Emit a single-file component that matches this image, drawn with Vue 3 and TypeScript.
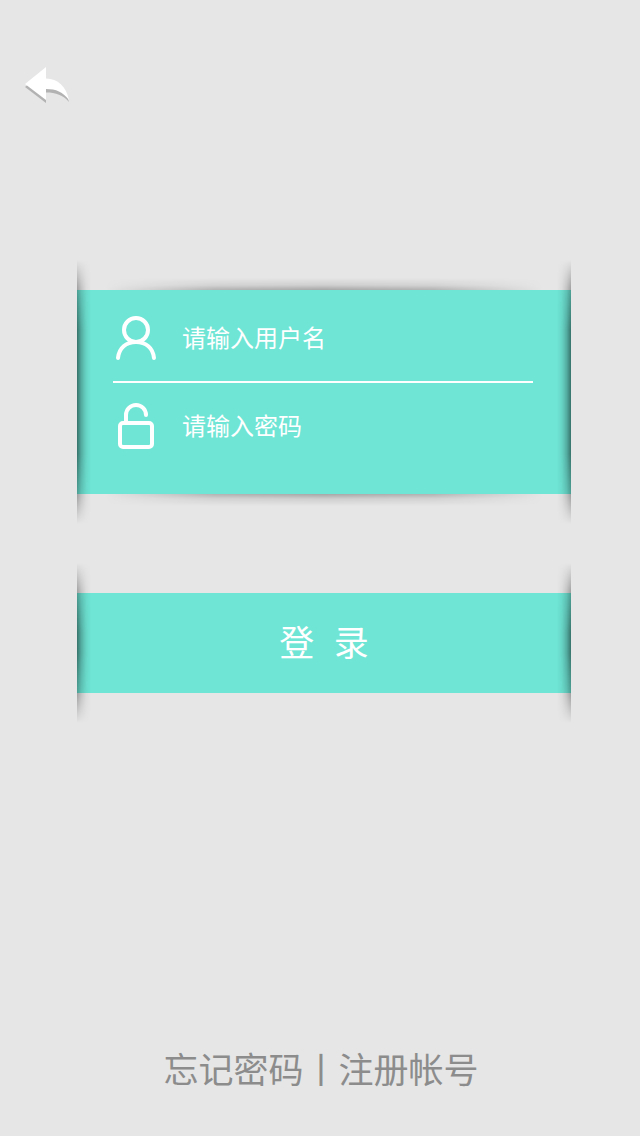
<script setup lang="ts">
import { ref } from 'vue'

const username = ref<string>('')
const password = ref<string>('')
</script>

<template>
  <div class="page">
    <header class="top">
      <button class="back" type="button" aria-label="返回">
        <svg width="46" height="38" viewBox="0 0 46 38" aria-hidden="true">
          <g transform="translate(0 3)" fill="#b2b2b2">
            <path d="M1 17 22 1V12C34 12 42 19 45 32 39 25 32 22.500 22 22.500V33Z" />
          </g>
          <path fill="#fff" d="M1 17 22 0V11.500C34 12 42 19 45 33 39 25 32 22 22 22V33Z" />
        </svg>
      </button>
    </header>

    <form class="form" @submit.prevent>
      <div class="panel fields">
        <span class="edge top-edge"></span>
        <span class="edge bottom-edge"></span>
        <span class="side left"></span>
        <span class="side right"></span>
        <div class="row first">
          <label for="username" aria-label="用户名">
            <svg width="46" height="48" viewBox="0 0 46 48" fill="none" stroke="#fff" stroke-width="4" stroke-linecap="round" aria-hidden="true">
              <circle cx="23" cy="15" r="12" />
              <path d="M5 43C6 33 13 27 23 27S40 33 41 43" />
            </svg>
          </label>
          <input id="username" v-model="username" type="text" placeholder="请输入用户名" />
        </div>
        <div class="row second">
          <label for="password" aria-label="密码">
            <svg width="46" height="48" viewBox="0 0 46 48" fill="none" stroke="#fff" stroke-width="4" stroke-linecap="round" aria-hidden="true">
              <rect x="7" y="20" width="32" height="24" rx="3" />
              <path d="M13 19V12A10 10 0 0 1 33 12" />
            </svg>
          </label>
          <input id="password" v-model="password" type="password" placeholder="请输入密码" />
        </div>
      </div>

      <div class="panel">
        <span class="side left"></span>
        <span class="side right"></span>
        <button class="login" type="submit">登&nbsp;&nbsp;录</button>
      </div>
    </form>

    <footer class="links">
      <a href="#forgot">忘记密码</a><span>丨</span><a href="#register">注册帐号</a>
    </footer>
  </div>
</template>

<style>
body {
  background: #e6e6e6;
}
</style>

<style scoped>
.page {
  box-sizing: border-box;
  display: flex;
  flex-direction: column;
  min-height: 100vh;
  padding: 67px 69px 39px 77px;
  background: #e6e6e6;
  font-family: "Liberation Sans", "Noto Sans CJK SC", sans-serif;
}

.top {
  height: 38px;
  margin: 0 0 185px -53px;
}

button {
  padding: 0;
  border: 0;
  background: none;
  font-family: inherit;
  cursor: pointer;
}

svg {
  display: block;
}

.form {
  display: flex;
  flex-direction: column;
  gap: 99px;
}

.panel {
  position: relative;
  background: #6fe5d5;
}

.fields {
  padding: 6px 38px 23px 36px;
}

.side {
  position: absolute;
  top: -30px;
  bottom: -30px;
  width: 14px;
  pointer-events: none;
  mask-image: linear-gradient(transparent, rgba(0, 0, 0, 0.6) 28px, #000 70px, #000 calc(100% - 70px), rgba(0, 0, 0, 0.6) calc(100% - 28px), transparent);
}

.left {
  left: 0;
  background: linear-gradient(to right, rgba(0, 0, 0, 0.5), rgba(0, 0, 0, 0.25) 30%, rgba(0, 0, 0, 0.07) 65%, transparent);
}

.right {
  right: 0;
  background: linear-gradient(to left, rgba(0, 0, 0, 0.5), rgba(0, 0, 0, 0.25) 30%, rgba(0, 0, 0, 0.07) 65%, transparent);
}

.edge {
  position: absolute;
  left: 28px;
  right: 28px;
  height: 12px;
  pointer-events: none;
  mask-image: linear-gradient(to right, transparent, rgba(0, 0, 0, 0.8) 25%, #000 50%, rgba(0, 0, 0, 0.8) 75%, transparent);
}

.top-edge {
  bottom: 100%;
  background: linear-gradient(to top, rgba(0, 0, 0, 0.28), rgba(0, 0, 0, 0.1) 40%, transparent);
}

.bottom-edge {
  top: 100%;
  background: linear-gradient(rgba(0, 0, 0, 0.28), rgba(0, 0, 0, 0.1) 40%, transparent);
}

.row {
  box-sizing: border-box;
  display: flex;
  align-items: center;
  gap: 23px;
  height: 88px;
}

.first {
  height: 87px;
  border-bottom: 2px solid #fff;
}

input {
  flex: 1;
  min-width: 0;
  height: 48px;
  padding: 0;
  border: 0;
  outline: 0;
  background: none;
  color: #fff;
  font-family: inherit;
  font-size: 24px;
}

input::placeholder {
  color: #fff;
  opacity: 1;
}

.login {
  display: block;
  width: 100%;
  height: 100px;
  padding-top: 2px;
  color: #fff;
  font-size: 35px;
  line-height: 98px;
}

.links {
  display: flex;
  justify-content: center;
  margin: auto -71px 0 -77px;
  color: #8c8c8c;
  font-size: 35px;
  line-height: 52px;
  white-space: nowrap;
}

.links a {
  color: inherit;
  text-decoration: none;
}
</style>
